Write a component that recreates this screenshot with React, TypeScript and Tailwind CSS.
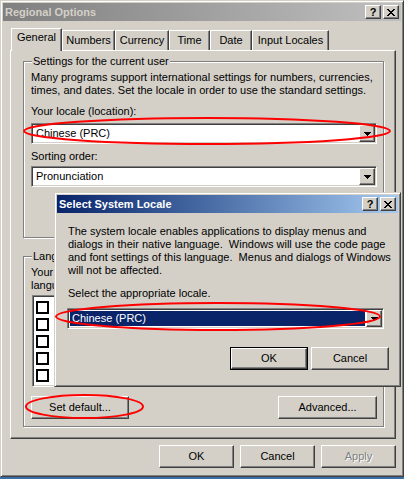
import React from 'react';

const raised =
  'border border-t-white border-l-white border-r-[#404040] border-b-[#404040] shadow-[inset_-1px_-1px_#808080,inset_1px_1px_#d4d0c8] bg-[#d4d0c8]';
const sunken =
  'border border-t-[#808080] border-l-[#808080] border-r-white border-b-white shadow-[inset_1px_1px_#404040,inset_-1px_-1px_#d4d0c8]';
const frame =
  'border border-t-[#d4d0c8] border-l-[#d4d0c8] border-r-[#404040] border-b-[#404040] shadow-[inset_1px_1px_#fff,inset_-1px_-1px_#808080] bg-[#d4d0c8] p-[2px]';

const CloseGlyph = () => (
  <svg width="8" height="7" viewBox="0 0 8 7" shapeRendering="crispEdges">
    <path d="M0 0h2v1H0zM6 0h2v1H6zM1 1h2v1H1zM5 1h2v1H5zM2 2h4v1H2zM3 3h2v1H3zM2 4h4v1H2zM1 5h2v1H1zM5 5h2v1H5zM0 6h2v1H0zM6 6h2v1H6z" fill="#000" />
  </svg>
);

const CaptionButtons = () => (
  <div className="flex gap-[2px]">
    <div className={`${raised} w-[16px] h-[14px] flex items-center justify-center`}>
      <span className="font-bold text-[11px] leading-[11px] text-black">?</span>
    </div>
    <div className={`${raised} w-[16px] h-[14px] flex items-center justify-center`}>
      <CloseGlyph />
    </div>
  </div>
);

const Arrow = () => (
  <svg width="7" height="4" viewBox="0 0 7 4" shapeRendering="crispEdges">
    <path d="M0 0h7v1H0zM1 1h5v1H1zM2 2h3v1H2zM3 3h1v1H3z" fill="#000" />
  </svg>
);

const Combo = ({ value, width, selected }: { value: string; width: string; selected?: boolean }) => (
  <div className={`${sunken} ${width} h-[21px] bg-white flex p-[1px]`}>
    <div className="flex-1 p-[1px] flex">
      <div
        className={`flex-1 flex items-center pl-[2px] whitespace-nowrap ${
          selected ? 'bg-[#0a246a] text-white' : 'text-black'
        }`}
      >
        {value}
      </div>
    </div>
    <div className={`${raised} w-[16px] h-[17px] flex items-center justify-center`}>
      <Arrow />
    </div>
  </div>
);

const Button = ({ label, width, disabled }: { label: string; width: string; disabled?: boolean }) => (
  <div className={`${raised} ${width} h-[23px] flex items-center justify-center`}>
    <span className={disabled ? 'text-[#808080] [text-shadow:1px_1px_0_#fff]' : 'text-black'}>{label}</span>
  </div>
);

const Tab = ({ label, width, active }: { label: string; width: string; active?: boolean }) =>
  active ? (
    <div
      className={`relative z-10 ${width} h-[23px] -mb-px border-l border-t border-r border-l-white border-t-white border-r-[#404040] shadow-[inset_-1px_0_#808080] bg-[#d4d0c8] flex justify-center pt-[2px]`}
    >
      {label}
    </div>
  ) : (
    <div
      className={`${width} h-[20px] border-l border-t border-r border-l-white border-t-white border-r-[#404040] shadow-[inset_-1px_0_#808080] bg-[#d4d0c8] flex justify-center pt-[3px]`}
    >
      {label}
    </div>
  );

const GroupLabel = ({ children }: { children: React.ReactNode }) => (
  <div className="self-start -mt-[7px] ml-[1px] px-[1px] bg-[#d4d0c8] whitespace-nowrap">{children}</div>
);

const Checkbox = () => <div className="w-[13px] h-[13px] border-2 border-black bg-white shrink-0" />;

export default function App() {
  return (
    <div className="relative w-[404px] h-[479px] bg-[#3a6ea5] font-['Liberation_Sans',Arial,sans-serif] text-[11px] leading-[13px] text-black overflow-hidden">
      <div className={`${frame} w-[404px] h-[477px] flex flex-col`}>
        {/* title bar */}
        <div className="h-[18px] flex items-center justify-between pl-[2px] pr-[2px] bg-linear-to-r from-[#808080] to-[#c0c0c0]">
          <span className="font-bold text-[#d4d0c8]">Regional Options</span>
          <CaptionButtons />
        </div>

        <div className="flex flex-col pl-[7px]">
          {/* tabs */}
          <div className="flex items-end h-[22px] mt-[7px] ml-[1px]">
            <Tab label="General" width="w-[51px]" active />
            <Tab label="Numbers" width="w-[53px]" />
            <Tab label="Currency" width="w-[54px]" />
            <Tab label="Time" width="w-[41px]" />
            <Tab label="Date" width="w-[42px]" />
            <Tab label="Input Locales" width="w-[77px]" />
          </div>

          {/* panel */}
          <div className={`${raised} w-[386px] h-[389px] flex flex-col pl-[12px] pt-[10px]`}>
            <div className="w-[361px] h-[177px] border border-[#808080] shadow-[inset_1px_1px_#fff,1px_1px_#fff] flex flex-col pl-[7px]">
              <GroupLabel>Settings for the current user</GroupLabel>
              <div className="mt-[3px] whitespace-nowrap">
                Many programs support international settings for numbers, currencies,
                <br />
                times, and dates. Set the locale in order to use the standard settings.
              </div>
              <div className="mt-[8px]">Your locale (location):</div>
              <div className="mt-[5px]">
                <Combo value="Chinese (PRC)" width="w-[346px]" />
              </div>
              <div className="mt-[6px]">Sorting order:</div>
              <div className="mt-[3px]">
                <Combo value="Pronunciation" width="w-[346px]" />
              </div>
            </div>

            <div className="mt-[18px] w-[361px] h-[171px] border border-[#808080] shadow-[inset_1px_1px_#fff,1px_1px_#fff] flex flex-col pl-[7px]">
              <GroupLabel>Language settings for the system</GroupLabel>
              <div className="mt-[3px] whitespace-nowrap">
                Your system is configured to read and write documents in multiple
                <br />
                languages.
              </div>
              <div className={`${sunken} mt-[3px] ml-[1px] w-[345px] h-[92px] bg-white flex flex-col pl-[3px] pt-[5px]`}>
                {[0, 1, 2, 3, 4].map((i) => (
                  <div key={i} className="h-[17px] flex items-start shrink-0">
                    <Checkbox />
                  </div>
                ))}
              </div>
              <div className="mt-[9px] flex justify-between w-[346px]">
                <Button label="Set default..." width="w-[98px]" />
                <Button label="Advanced..." width="w-[99px]" />
              </div>
            </div>
          </div>

          {/* dialog buttons */}
          <div className="w-[386px] mt-[6px] flex justify-end gap-[6px]">
            <Button label="OK" width="w-[75px]" />
            <Button label="Cancel" width="w-[75px]" />
            <Button label="Apply" width="w-[75px]" disabled />
          </div>
        </div>
      </div>

      {/* Select System Locale dialog, floating over the main window */}
      <div className={`${frame} absolute left-[54px] top-[192px] w-[347px] h-[195px] flex flex-col`}>
        <div className="h-[18px] flex items-center justify-between pl-[2px] pr-[2px] bg-linear-to-r from-[#0a246a] to-[#a6caf0]">
          <span className="font-bold text-white">Select System Locale</span>
          <CaptionButtons />
        </div>
        <div className="flex flex-col pl-[11px]">
          <div className="mt-[12px] whitespace-pre">
            The system locale enables applications to display menus and
            <br />
            {'dialogs in their native language.  Windows will use the code page'}
            <br />
            {'and font settings of this language.  Menus and dialogs of Windows'}
            <br />
            will not be affected.
          </div>
          <div className="mt-[10px]">Select the appropriate locale.</div>
          <div className="mt-[8px] -ml-px">
            <Combo value="Chinese (PRC)" width="w-[317px]" selected />
          </div>
        </div>
        <div className="mt-[18px] flex justify-end gap-[3px] pr-[9px]">
          <div className="w-[78px] h-[23px] border border-black">
            <div className={`${raised} w-full h-full flex items-center justify-center`}>OK</div>
          </div>
          <Button label="Cancel" width="w-[78px]" />
        </div>
      </div>

      {/* red annotation ellipses */}
      <svg className="absolute left-0 top-0 pointer-events-none" width="404" height="479" viewBox="0 0 404 479">
        <ellipse cx="207" cy="131" rx="183" ry="13" fill="none" stroke="#ff0000" strokeWidth="2" />
        <ellipse cx="218" cy="316.5" rx="162" ry="13.5" fill="none" stroke="#ff0000" strokeWidth="2" />
        <ellipse cx="84.5" cy="406.5" rx="58.5" ry="11.5" fill="none" stroke="#ff0000" strokeWidth="2" />
      </svg>
    </div>
  );
}
